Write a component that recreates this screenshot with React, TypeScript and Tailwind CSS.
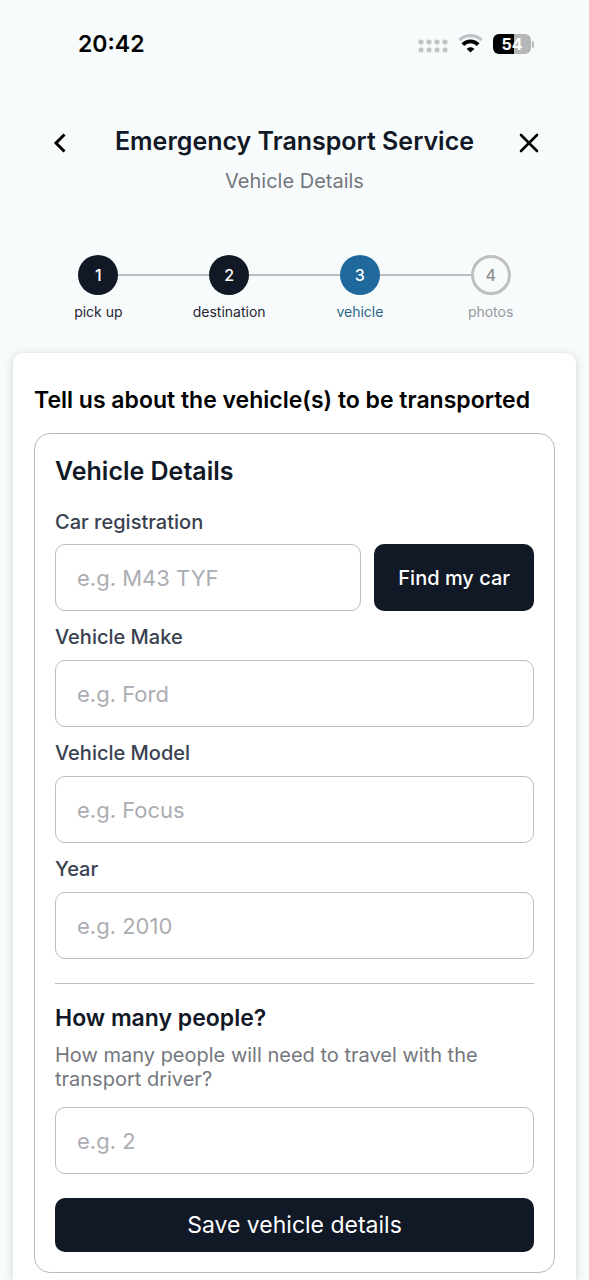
import { useState, type ChangeEvent, type InputHTMLAttributes } from "react";
import { clsx } from "clsx";

type StepState = "done" | "current" | "upcoming";

const steps: { label: string; state: StepState }[] = [
    { label: "pick up", state: "done" },
    { label: "destination", state: "done" },
    { label: "vehicle", state: "current" },
    { label: "photos", state: "upcoming" },
];

const vehicleFields = [
    { id: "make", label: "Vehicle Make", placeholder: "e.g. Ford" },
    { id: "model", label: "Vehicle Model", placeholder: "e.g. Focus" },
    { id: "year", label: "Year", placeholder: "e.g. 2010" },
];

function StatusBar() {
    return (
        <div className="flex h-22 items-center justify-between pr-[55px] pl-[78px]">
            <span className="text-[23px] leading-8 font-semibold text-black">20:42</span>
            <div className="flex items-center gap-[10px]">
                <svg width="30" height="14" viewBox="0 0 30 14" fill="#c3c5c7" className="mt-1">
                    {[3, 11, 19, 27].map((x) => (
                        <g key={x}>
                            <rect x={x - 2.5} y="0.5" width="5" height="5" rx="2" />
                            <rect x={x - 2.5} y="8.5" width="5" height="5" rx="2" />
                        </g>
                    ))}
                </svg>
                <svg width="25" height="20" viewBox="0 0 25 20" fill="none" strokeWidth="3.2">
                    <path d="M1.4 6.2C7.4 0.2 17.6 0.2 23.6 6.2" stroke="#bfc2c4" />
                    <path d="M4.8 10.6C9 6.3 16 6.3 20.2 10.6" stroke="#000" strokeWidth="3.8" />
                    <path d="M12.5 18.6L8.6 14.7C10.7 12.6 14.3 12.6 16.4 14.7Z" fill="#000" />
                </svg>
                <div className="flex items-center gap-px">
                    <div className="flex h-5 w-[38px] items-center justify-center rounded-md bg-linear-to-r from-black from-54% to-[#b4b6b8] to-54% text-base font-bold text-white">
                        54
                    </div>
                    <div className="h-[7px] w-[2px] rounded-r-full bg-[#b4b6b8]" />
                </div>
            </div>
        </div>
    );
}

function Stepper() {
    return (
        <ol className="flex px-[33px]">
            {steps.map((step, i) => (
                <li key={step.label} className="flex flex-1 flex-col items-center gap-2">
                    <div className="flex w-full items-center">
                        <div className={clsx("h-[2px] flex-1", i > 0 && "bg-[#bcbbbf]")} />
                        <div
                            className={clsx(
                                "flex size-10 items-center justify-center rounded-full text-base font-medium",
                                step.state === "done" && "bg-[#111826] text-white",
                                step.state === "current" && "bg-[#20699c] text-white",
                                step.state === "upcoming" && "border-[3px] border-[#bfbfc1] text-[#919295]",
                            )}
                        >
                            {i + 1}
                        </div>
                        <div className={clsx("h-[2px] flex-1", i < steps.length - 1 && "bg-[#bcbbbf]")} />
                    </div>
                    <span
                        className={clsx(
                            "text-sm leading-[18px]",
                            step.state === "done" && "text-[#1f2530]",
                            step.state === "current" && "text-[#2b6688]",
                            step.state === "upcoming" && "text-[#97989b]",
                        )}
                    >
                        {step.label}
                    </span>
                </li>
            ))}
        </ol>
    );
}

function TextField({ className, ...props }: InputHTMLAttributes<HTMLInputElement>) {
    return (
        <input
            type="text"
            className={clsx(
                "h-[67px] w-full min-w-0 rounded-[10px] border border-[#bcbcc0] bg-white px-[21px] text-[22px] text-[#111826] outline-none placeholder:text-[#abadb2] focus:border-[#20699c]",
                className,
            )}
            {...props}
        />
    );
}

export default function App() {
    const [values, setValues] = useState<Record<string, string>>({});

    const bind = (id: string) => ({
        id,
        name: id,
        value: values[id] ?? "",
        onChange: (e: ChangeEvent<HTMLInputElement>) =>
            setValues((prev) => ({ ...prev, [id]: e.target.value })),
    });

    return (
        <div className="flex min-h-screen flex-col bg-[#f7fbfc] font-['Inter',sans-serif] text-[#111826]">
            <StatusBar />

            <header className="flex items-start justify-between px-[48px] pt-9">
                <button type="button" aria-label="Back" className="mt-[7px] flex size-6 items-center justify-center">
                    <svg width="14" height="20" viewBox="0 0 14 20" fill="none" stroke="#000" strokeWidth="3">
                        <path d="M11.5 1.5L3 10L11.5 18.5" />
                    </svg>
                </button>
                <div className="text-center">
                    <h1 className="text-[25px] leading-[34px] font-semibold">Emergency Transport Service</h1>
                    <p className="mt-[9px] text-xl leading-7 text-[#74777d]">Vehicle Details</p>
                </div>
                <button type="button" aria-label="Close" className="mt-[7px] flex size-6 items-center justify-center">
                    <svg width="20" height="20" viewBox="0 0 20 20" stroke="#000" strokeWidth="2.6" strokeLinecap="round">
                        <path d="M2 2L18 18M18 2L2 18" />
                    </svg>
                </button>
            </header>

            <div className="mt-15">
                <Stepper />
            </div>

            <main className="mx-[13px] mt-8 flex-1 rounded-t-[10px] bg-white px-[21px] pt-8 pb-[7px] shadow-[0_1px_8px_rgba(0,0,0,0.16)]">
                <h2 className="text-[23px] leading-[30px] font-semibold text-black">
                    Tell us about the vehicle(s) to be transported
                </h2>

                <form
                    onSubmit={(e) => e.preventDefault()}
                    className="mt-[18px] rounded-2xl border border-[#b9b9bc] px-5 py-5"
                >
                    <h3 className="text-[25px] leading-[34px] font-semibold">Vehicle Details</h3>

                    <div className="mt-[22px] flex flex-col gap-[14px]">
                        <div>
                            <label htmlFor="registration" className="block text-xl leading-6 font-medium text-[#394150]">
                                Car registration
                            </label>
                            <div className="mt-[10px] flex gap-[13px]">
                                <TextField placeholder="e.g. M43 TYF" {...bind("registration")} />
                                <button
                                    type="button"
                                    className="shrink-0 rounded-[10px] bg-[#111826] px-6 text-xl font-medium text-white"
                                >
                                    Find my car
                                </button>
                            </div>
                        </div>

                        {vehicleFields.map((field) => (
                            <div key={field.id}>
                                <label htmlFor={field.id} className="block text-xl leading-6 font-medium text-[#394150]">
                                    {field.label}
                                </label>
                                <TextField className="mt-[11px]" placeholder={field.placeholder} {...bind(field.id)} />
                            </div>
                        ))}
                    </div>

                    <hr className="mt-6 border-[#bcbcc0]" />

                    <label htmlFor="people" className="mt-[19px] block text-[23px] leading-[30px] font-semibold">
                        How many people?
                    </label>
                    <p className="mt-[10px] text-xl leading-6 text-[#74777d]">
                        How many people will need to travel with the transport driver?
                    </p>
                    <TextField className="mt-4" placeholder="e.g. 2" inputMode="numeric" {...bind("people")} />

                    <button
                        type="submit"
                        className="mt-6 h-[54px] w-full rounded-[10px] bg-[#111826] text-[23px] text-white"
                    >
                        Save vehicle details
                    </button>
                </form>
            </main>
        </div>
    );
}
